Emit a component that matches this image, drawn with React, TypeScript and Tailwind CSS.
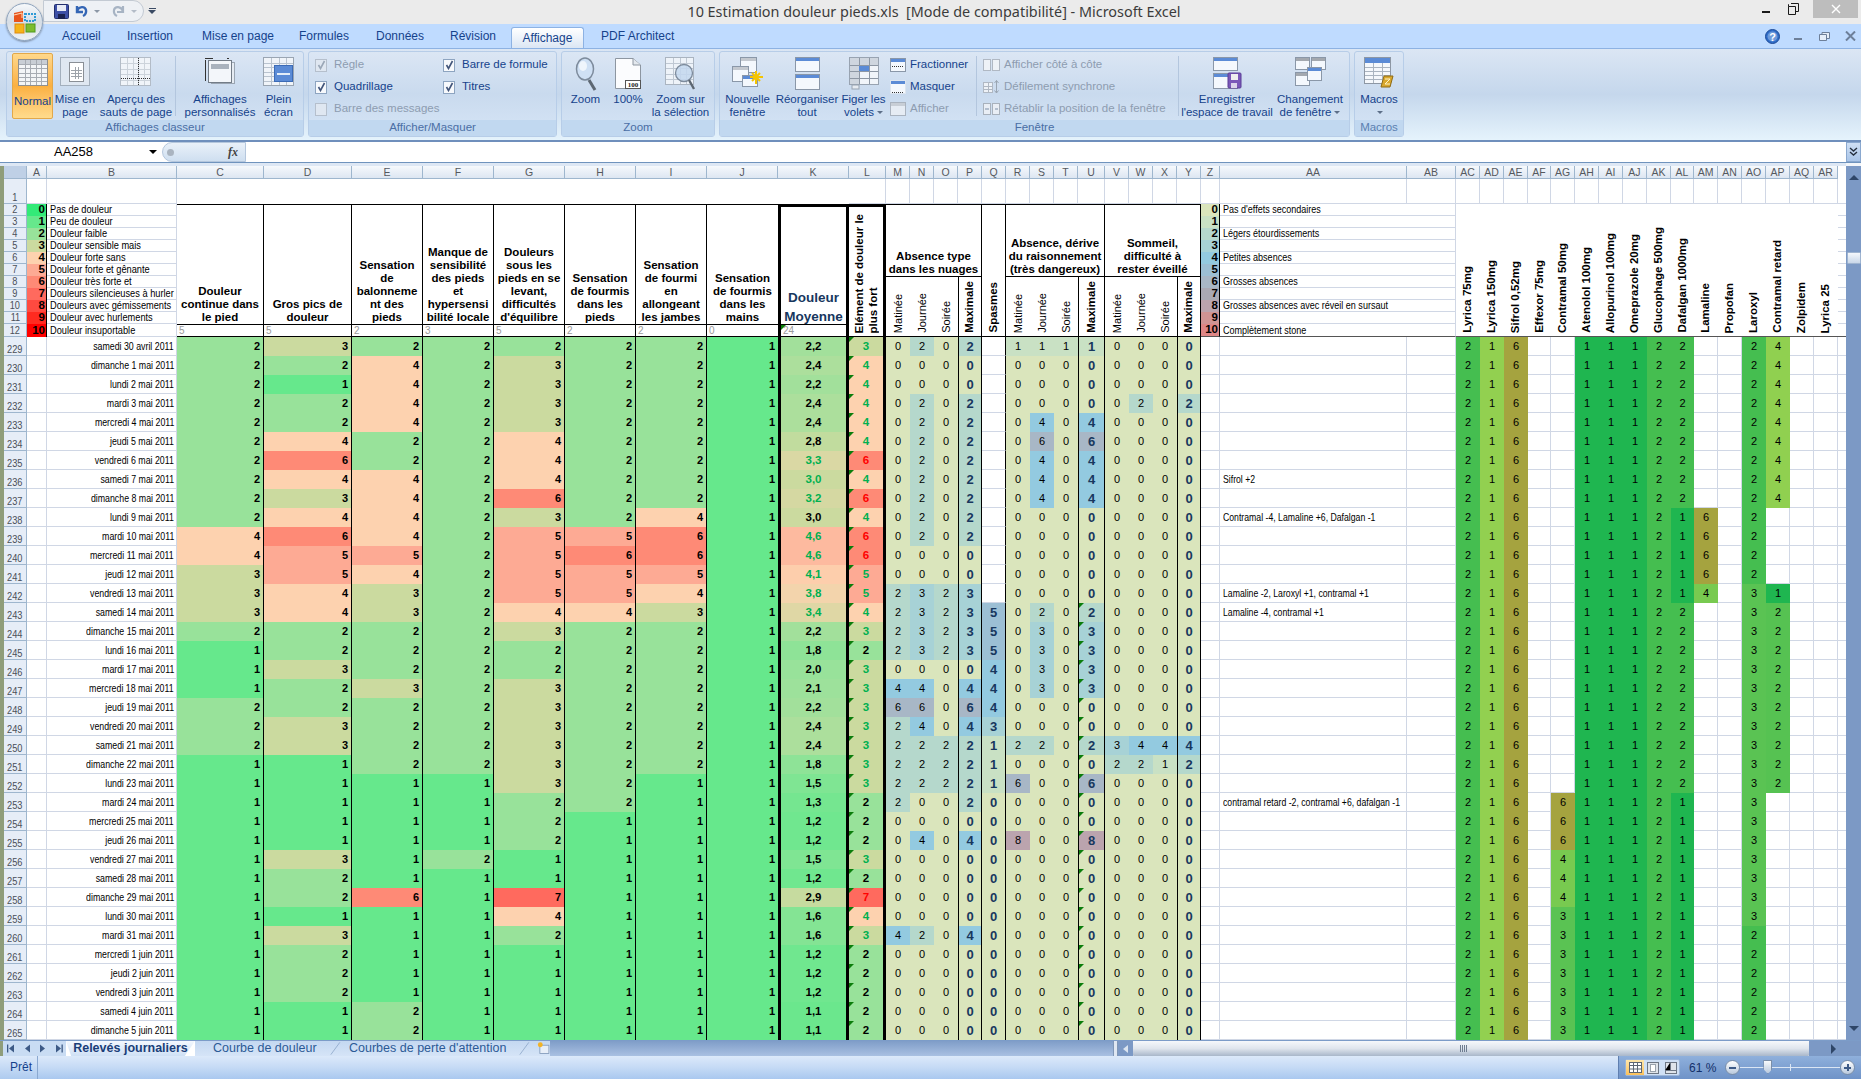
import React from "react";

// pain scale 0..10, same as the legend in column A
const PAIN = ["bg-[#33ea78]", "bg-[#66e88c]", "bg-[#98e29a]", "bg-[#cbda9f]", "bg-[#fdd2af]", "bg-[#fdaa94]", "bg-[#fe8a76]", "bg-[#ff6a5e]", "bg-[#ff4a40]", "bg-[#ff2a20]", "bg-[#ff0000]"];
const PAIN_RGB = [[51, 234, 120], [102, 232, 140], [152, 226, 154], [203, 218, 159], [253, 210, 175], [253, 170, 148], [254, 138, 118]];
// side effects scale 0..10, legend in column Z
const ABS = ["bg-[#dae5bc]", "bg-[#c9e1c4]", "bg-[#b5d8cc]", "bg-[#a7d2d6]", "bg-[#93cae0]", "bg-[#9cbfd4]", "bg-[#a8b7c6]", "bg-[#aaa9b4]", "bg-[#bba4ae]", "bg-[#d09494]", "bg-[#de8686]"];

const COLS = "grid-cols-[23px_20px_130px_87px_88px_71px_71px_71px_71px_71px_71px_71px_37px_24px_24px_24px_24px_24px_24px_24px_24px_27px_24px_24px_24px_24px_19px_187px_49px_24px_24px_24px_23px_24px_24px_24px_24px_24px_23px_24px_24px_24px_24px_24px_24px_8px]";
const LETTERS = ["A", "B", "C", "D", "E", "F", "G", "H", "I", "J", "K", "L", "M", "N", "O", "P", "Q", "R", "S", "T", "U", "V", "W", "X", "Y", "Z", "AA", "AB", "AC", "AD", "AE", "AF", "AG", "AH", "AI", "AJ", "AK", "AL", "AM", "AN", "AO", "AP", "AQ", "AR"];

// date, C..J, moyenne, max, M..P, Q, R..U, V..Y
const ROWS: [string, string, string, number, string, string, string, string][] = [
  ["samedi 30 avril 2011", "23222221", "2,2", 3, "0202", "", "1111", "0000"],
  ["dimanche 1 mai 2011", "22423221", "2,4", 4, "0000", "", "0000", "0000"],
  ["lundi 2 mai 2011", "21423221", "2,2", 4, "0000", "", "0000", "0000"],
  ["mardi 3 mai 2011", "22423221", "2,4", 4, "0202", "", "0000", "0202"],
  ["mercredi 4 mai 2011", "22423221", "2,4", 4, "0202", "", "0404", "0000"],
  ["jeudi 5 mai 2011", "24224221", "2,8", 4, "0202", "", "0606", "0000"],
  ["vendredi 6 mai 2011", "26224221", "3,3", 6, "0202", "", "0404", "0000"],
  ["samedi 7 mai 2011", "24424221", "3,0", 4, "0202", "", "0404", "0000"],
  ["dimanche 8 mai 2011", "23426221", "3,2", 6, "0202", "", "0404", "0000"],
  ["lundi 9 mai 2011", "24423241", "3,0", 4, "0202", "", "0000", "0000"],
  ["mardi 10 mai 2011", "46425561", "4,6", 6, "0202", "", "0000", "0000"],
  ["mercredi 11 mai 2011", "45525661", "4,6", 6, "0000", "", "0000", "0000"],
  ["jeudi 12 mai 2011", "35425551", "4,1", 5, "0000", "", "0000", "0000"],
  ["vendredi 13 mai 2011", "34325541", "3,8", 5, "2323", "", "0000", "0000"],
  ["samedi 14 mai 2011", "34324431", "3,4", 4, "2323", "5", "0202", "0000"],
  ["dimanche 15 mai 2011", "22223221", "2,2", 3, "2323", "5", "0303", "0000"],
  ["lundi 16 mai 2011", "12222221", "1,8", 2, "2323", "5", "0303", "0000"],
  ["mardi 17 mai 2011", "13222221", "2,0", 3, "0000", "4", "0303", "0000"],
  ["mercredi 18 mai 2011", "12323221", "2,1", 3, "4404", "4", "0303", "0000"],
  ["jeudi 19 mai 2011", "22223221", "2,2", 3, "6606", "4", "0000", "0000"],
  ["vendredi 20 mai 2011", "23223221", "2,4", 3, "2404", "3", "0000", "0000"],
  ["samedi 21 mai 2011", "23223221", "2,4", 3, "2222", "1", "2202", "3444"],
  ["dimanche 22 mai 2011", "11223221", "1,8", 3, "2222", "1", "0000", "2212"],
  ["lundi 23 mai 2011", "11113211", "1,5", 3, "2222", "1", "6006", "0000"],
  ["mardi 24 mai 2011", "11112211", "1,3", 2, "2002", "0", "0000", "0000"],
  ["mercredi 25 mai 2011", "11112111", "1,2", 2, "0000", "0", "0000", "0000"],
  ["jeudi 26 mai 2011", "11112111", "1,2", 2, "0404", "0", "8008", "0000"],
  ["vendredi 27 mai 2011", "13121111", "1,5", 3, "0000", "0", "0000", "0000"],
  ["samedi 28 mai 2011", "12111111", "1,2", 2, "0000", "0", "0000", "0000"],
  ["dimanche 29 mai 2011", "12617111", "2,9", 7, "0000", "0", "0000", "0000"],
  ["lundi 30 mai 2011", "11114111", "1,6", 4, "0000", "0", "0000", "0000"],
  ["mardi 31 mai 2011", "13112111", "1,6", 3, "4204", "0", "0000", "0000"],
  ["mercredi 1 juin 2011", "12111111", "1,2", 2, "0000", "0", "0000", "0000"],
  ["jeudi 2 juin 2011", "12111111", "1,2", 2, "0000", "0", "0000", "0000"],
  ["vendredi 3 juin 2011", "12111111", "1,2", 2, "0000", "0", "0000", "0000"],
  ["samedi 4 juin 2011", "11211111", "1,1", 2, "0000", "0", "0000", "0000"],
  ["dimanche 5 juin 2011", "11211111", "1,1", 2, "0000", "0", "0000", "0000"],
];

const COMMENTS: Record<number, string> = {
  236: "Sifrol +2",
  238: "Contramal -4, Lamaline +6, Dafalgan -1",
  242: "Lamaline -2, Laroxyl +1, contramal +1",
  243: "Lamaline -4, contramal +1",
  253: "contramal retard -2, contramal +6, dafalgan -1",
};

const MEDS = ["Lyrica 75mg", "Lyrica 150mg", "Sifrol 0,52mg", "Effexor 75mg", "Contramal 50mg", "Atenolol 100mg", "Allopurinol 100mg", "Omeprazole 20mg", "Glucophage 500mg", "Dafalgan 1000mg", "Lamaline", "Propofan", "Laroxyl", "Contramal retard", "Zolpidem", "Lyrica 25"];

function medValue(m: number, i: number): string {
  switch (m) {
    case 0: return "2";
    case 1: return "1";
    case 2: return "6";
    case 4: return i < 24 ? "" : i < 27 ? "6" : i < 30 ? "4" : "3";
    case 5: case 6: case 7: return "1";
    case 8: return "2";
    case 9: return i < 9 ? "2" : i < 14 ? "1" : i < 24 ? "2" : "1";
    case 10: return i < 9 ? "" : i < 13 ? "6" : i === 13 ? "4" : "";
    case 12: return i < 13 ? "2" : i < 31 ? "3" : "2";
    case 13: return i < 9 ? "4" : i < 13 ? "" : i === 13 ? "1" : i < 24 ? "2" : "";
    default: return "";
  }
}

function medBg(m: number, v: string) {
  if (m === 1) return "bg-[#92d050]";
  if (v === "1") return "bg-[#1fb650]";
  if (v === "2") return m === 13 ? "bg-[#56c252]" : "bg-[#45be50]";
  if (v === "3") return "bg-[#5ac353]";
  if (v === "4") return m === 13 ? "bg-[#90d050]" : "bg-[#78ca50]";
  return "bg-[#a5a33f]";
}

function meanBg(v: number) {
  const lo = Math.floor(v);
  const t = v - lo;
  const a = PAIN_RGB[lo];
  const b = PAIN_RGB[lo + 1];
  return `rgb(${a.map((c, k) => Math.round(c + (b[k] - c) * t)).join(",")})`;
}

const Lines = ({ l }: { l: string[] }) => (
  <span>
    {l.map((t, i) => (
      <React.Fragment key={i}>
        {i > 0 && <br />}
        {t}
      </React.Fragment>
    ))}
  </span>
);

// the sheet font is squeezed at 61% zoom
const Nar = ({ children, cls }: { children: React.ReactNode; cls: string }) => <span className={`inline-block whitespace-nowrap ${cls}`}>{children}</span>;

const Tri = () => <span className="absolute left-0 top-0 w-[5px] h-[5px] bg-[#0b7d0b] [clip-path:polygon(0_0,100%_0,0_100%)]" />;

const RowHead = ({ n }: { n: string | number }) => (
  <div className="bg-[#e6edf7] border-r border-b border-[#9eb6ce] text-[10.5px] leading-[11px] text-[#4a4f57] flex items-end justify-center">
    <Nar cls="scale-x-[0.88]">{n}</Nar>
  </div>
);

const Blank = () => <div className="border-r border-b border-[#d0d7e5]" />;

const Vert = ({ children, cls }: { children: React.ReactNode; cls: string }) => (
  <span className={`[writing-mode:vertical-rl] rotate-180 text-left ${cls}`}>{children}</span>
);

const HEAD = "border-t border-r border-black flex items-end justify-center text-center font-bold text-[11.5px] leading-[13px] row-span-10 text-black";
const WEIGHT = "border-t border-r border-b border-black text-[10px] leading-[11px] text-[#9a9a9a] pl-[2px]";

function Legend({ n, text }: { n: number; text: string }) {
  return (
    <>
      <div className={`${PAIN[n]} border-r border-black flex items-center justify-end pr-[1px] font-bold text-[11.5px] leading-none`}>{n}</div>
      <div className="border-r border-b border-[#d0d7e5] text-[11px] leading-none flex items-center pl-[3px]">
        <Nar cls="scale-x-[0.84] origin-left">{text}</Nar>
      </div>
    </>
  );
}

function Legend2({ n, text }: { n: number; text: string }) {
  return (
    <>
      <div className={`${ABS[n]} border-r border-black flex items-center justify-end pr-[1px] font-bold text-[11.5px] leading-none ${n === 10 ? "border-b border-b-[#555]" : ""}`}>{n}</div>
      <div className={`border-b ${n === 10 ? "border-b-[#555]" : "border-[#d0d7e5]"} text-[11px] leading-none flex items-center pl-[3px]`}>
        <Nar cls="scale-x-[0.82] origin-left">{text}</Nar>
      </div>
      <div className={`border-b ${n === 10 ? "border-b-[#555]" : "border-[#d0d7e5]"} border-r border-r-[#d0d7e5]`} />
    </>
  );
}

const PAIN_LEGEND = ["Pas de douleur", "Peu de douleur", "Douleur faible", "Douleur sensible mais", "Douleur forte sans", "Douleur forte et gênante", "Douleur très forte et", "Douleurs silencieuses à hurler", "Douleurs avec gémissements", "Douleur avec hurlements", "Douleur insuportable"];
const SIDE_LEGEND = ["Pas d'effets secondaires", "", "Légers étourdissements", "", "Petites absences", "", "Grosses absences", "", "Grosses absences avec réveil en sursaut", "", "Complètement stone"];

function SubHeads() {
  return (
    <>
      {["Matinée", "Journée", "Soirée"].map((t) => (
        <div key={t} className="row-span-5 border-t border-b border-t-black border-b-black flex items-end justify-center pb-[3px]">
          <Vert cls="text-[11px] leading-none">{t}</Vert>
        </div>
      ))}
    </>
  );
}

function MaxHead() {
  return (
    <div className="row-span-5 border border-black flex items-end justify-center pb-[3px]">
      <Vert cls="font-bold text-[11.5px] leading-none">Maximale</Vert>
    </div>
  );
}

function Sheet() {
  return (
    <div className={`grid ${COLS} grid-rows-[13px_25px_repeat(10,12px)_13px_repeat(37,19px)] flex-1 font-['Liberation_Sans',sans-serif] text-black bg-white`}>
      {/* column letters */}
      <div className="bg-[#bfd0e6] border-r border-b border-[#9eb6ce]" />
      {LETTERS.map((c) => (
        <div key={c} className="bg-gradient-to-b from-[#f6f9fc] to-[#dde6f2] border-r border-b border-[#9eb6ce] text-[10.5px] leading-none text-[#55595f] flex items-center justify-center">{c}</div>
      ))}
      <div className="bg-white" />

      {/* row 1 */}
      <RowHead n={1} />
      <Blank />
      <Blank />
      <div className="col-span-9" />
      {LETTERS.slice(11).map((c) => (
        <Blank key={c} />
      ))}
      <div className="border-b border-[#d0d7e5]" />

      {/* rows 2..12 */}
      {PAIN_LEGEND.map((text, i) => (
        <React.Fragment key={i}>
          <RowHead n={i + 2} />
          <Legend n={i} text={text} />
          {i === 0 && (
            <>
              <div className={HEAD}><Lines l={["Douleur", "continue dans", "le pied"]} /></div>
              <div className={HEAD}><Lines l={["Gros pics de", "douleur"]} /></div>
              <div className={HEAD}><Lines l={["Sensation", "de", "balonneme", "nt des", "pieds"]} /></div>
              <div className={HEAD}><Lines l={["Manque de", "sensibilité", "des pieds", "et", "hypersensi", "bilité locale"]} /></div>
              <div className={HEAD}><Lines l={["Douleurs", "sous les", "pieds en se", "levant,", "difficultés", "d'équilibre"]} /></div>
              <div className={HEAD}><Lines l={["Sensation", "de fourmis", "dans les", "pieds"]} /></div>
              <div className={HEAD}><Lines l={["Sensation", "de fourmi", "en", "allongeant", "les jambes"]} /></div>
              <div className={`${HEAD} border-r-0`}><Lines l={["Sensation", "de fourmis", "dans les", "mains"]} /></div>
              <div className="row-span-10 border-t-[3px] border-x-[3px] border-black flex items-end justify-center text-center font-bold text-[13.5px] leading-[19px] text-[#17375e]">
                <span className="mb-[-2px]"><Lines l={["Douleur", "Moyenne"]} /></span>
              </div>
              <div className="row-span-11 border-t-[3px] border-r-[3px] border-b border-black flex items-end justify-center pb-[3px]">
                <Vert cls="font-bold text-[11.5px] leading-[14px]"><Lines l={["Elément de douleur le", "plus fort"]} /></Vert>
              </div>
              <div className="col-span-4 row-span-6 border-t border-r border-black flex items-end justify-center text-center font-bold text-[11.5px] leading-[13px]"><Lines l={["Absence type", "dans les nuages"]} /></div>
              <div className="row-span-11 border-t border-r border-b border-black flex items-end justify-center pb-[3px]">
                <Vert cls="font-bold text-[11.5px] leading-none">Spasmes</Vert>
              </div>
              <div className="col-span-4 row-span-6 border-t border-r border-black flex items-end justify-center text-center font-bold text-[11.5px] leading-[13px]"><Lines l={["Absence, dérive", "du raisonnement", "(très dangereux)"]} /></div>
              <div className="col-span-4 row-span-6 border-t border-r border-black flex items-end justify-center text-center font-bold text-[11.5px] leading-[13px]"><Lines l={["Sommeil,", "difficulté à", "rester éveillé"]} /></div>
            </>
          )}
          {i === 6 && (
            <>
              <SubHeads />
              <MaxHead />
              <SubHeads />
              <MaxHead />
              <SubHeads />
              <MaxHead />
            </>
          )}
          {i === 10 &&
            ["5", "5", "2", "3", "5", "2", "2", "0"].map((w, k) => (
              <div key={k} className={`${WEIGHT} ${k === 7 ? "border-r-0" : ""}`}>{w}</div>
            ))}
          {i === 10 && (
            <div className="relative border-t border-b-[1px] border-x-[3px] border-black text-[10px] leading-[11px] text-[#9a9a9a] pl-[2px]">
              <Tri />
              24
            </div>
          )}
          <Legend2 n={i} text={SIDE_LEGEND[i]} />
          {i === 0 &&
            MEDS.map((m) => (
              <div key={m} className="row-span-11 border-b border-[#555] flex items-end justify-center pb-[3px]">
                <Vert cls="font-bold text-[11.5px] leading-none whitespace-nowrap">{m}</Vert>
              </div>
            ))}
          <div className={`border-b ${i === 10 ? "border-[#555]" : "border-[#d0d7e5]"}`} />
        </React.Fragment>
      ))}

      {/* data rows 229..265 */}
      {ROWS.map(([date, pain, mean, top, nuages, spasme, derive, sommeil], i) => {
        const n = 229 + i;
        const val = parseFloat(mean.replace(",", "."));
        const meanGreen = val >= 3 && n !== 238;
        const topText = top === 2 ? "text-black" : top >= 6 ? "text-[#ff0000]" : "text-[#00b050]";
        return (
          <React.Fragment key={n}>
            <RowHead n={n} />
            <Blank />
            <div className="border-r border-b border-[#d0d7e5] text-[11px] leading-none flex items-center justify-end pr-[2px]">
              <Nar cls="scale-x-[0.8] origin-right">{date}</Nar>
            </div>
            {pain.split("").map((p, k) => (
              <div key={k} className={`${PAIN[+p]} ${k === 7 ? "" : "border-r border-black"} flex items-center justify-end pr-[3px] font-bold text-[11px] leading-none`}>{p}</div>
            ))}
            <div className={`border-x-[3px] border-black flex items-center justify-center font-bold text-[11.5px] leading-none ${meanGreen ? "text-[#00b050]" : "text-black"}`} style={{ backgroundColor: meanBg(val) }}>{mean}</div>
            <div className={`relative ${PAIN[top]} border-r-[3px] border-black flex items-center justify-center font-bold text-[11.5px] leading-none ${topText}`}>
              <Tri />
              {top}
            </div>
            {nuages.split("").map((v, k) => (
              <div key={k} className={k === 3 ? `${ABS[+v]} border-x border-black flex items-center justify-center font-bold text-[13px] leading-none text-[#17375e]` : `${ABS[+v]} flex items-center justify-center text-[11px] leading-none`}>{v}</div>
            ))}
            {spasme === "" ? (
              <div className="border-r border-b border-r-black border-b-[#d0d7e5]" />
            ) : (
              <div className={`${ABS[+spasme]} border-r border-black flex items-center justify-center font-bold text-[13px] leading-none text-[#17375e]`}>{spasme}</div>
            )}
            {derive.split("").map((v, k) => (
              <div key={k} className={k === 3 ? `relative ${ABS[+v]} border-x border-black flex items-center justify-center font-bold text-[13px] leading-none text-[#17375e]` : `${ABS[+v]} flex items-center justify-center text-[11px] leading-none`}>
                {k === 3 && i >= 14 && <Tri />}
                {v}
              </div>
            ))}
            {sommeil.split("").map((v, k) => (
              <div key={k} className={k === 3 ? `${ABS[+v]} border-x border-black flex items-center justify-center font-bold text-[13px] leading-none text-[#17375e]` : `${ABS[+v]} flex items-center justify-center text-[11px] leading-none`}>{v}</div>
            ))}
            <Blank />
            <div className="border-r border-b border-[#d0d7e5] text-[11px] leading-none flex items-center pl-[3px]">
              <Nar cls="scale-x-[0.79] origin-left">{COMMENTS[n] ?? ""}</Nar>
            </div>
            <Blank />
            {MEDS.map((m, k) => {
              const v = medValue(k, i);
              return v === "" ? (
                <Blank key={m} />
              ) : (
                <div key={m} className={`${medBg(k, v)} flex items-center justify-center text-[11px] leading-none`}>{v}</div>
              );
            })}
            <div className="border-b border-[#d0d7e5]" />
          </React.Fragment>
        );
      })}
    </div>
  );
}

/* ---------- ribbon icons ---------- */

const Win = ({ x, y, w, h, bar = "#5b8bd6", fill = "#f4f8fd", stroke = "#8a97a8" }: { x: number; y: number; w: number; h: number; bar?: string; fill?: string; stroke?: string }) => (
  <g>
    <rect x={x + 0.5} y={y + 0.5} width={w} height={h} fill={fill} stroke={stroke} />
    <rect x={x + 1} y={y + 1} width={w - 1} height={3} fill={bar} />
  </g>
);

const Cells = ({ x, y, w, h, nx, ny, stroke = "#b9c3cf" }: { x: number; y: number; w: number; h: number; nx: number; ny: number; stroke?: string }) => (
  <g stroke={stroke} strokeWidth="1">
    {Array.from({ length: nx - 1 }, (_, i) => (
      <line key={i} x1={x + Math.round(((i + 1) * w) / nx) + 0.5} y1={y} x2={x + Math.round(((i + 1) * w) / nx) + 0.5} y2={y + h} />
    ))}
    {Array.from({ length: ny - 1 }, (_, i) => (
      <line key={i} x1={x} y1={y + Math.round(((i + 1) * h) / ny) + 0.5} x2={x + w} y2={y + Math.round(((i + 1) * h) / ny) + 0.5} />
    ))}
  </g>
);

const Ico = ({ w = 32, h = 32, children }: { w?: number; h?: number; children: React.ReactNode }) => (
  <svg width={w} height={h} viewBox={`0 0 ${w} ${h}`}>{children}</svg>
);

const I = {
  normal: (
    <Ico w={30} h={28}>
      <rect x="0.5" y="0.5" width="29" height="26" fill="#f3f5f7" stroke="#8f8f8f" />
      <rect x="1" y="1" width="28" height="4" fill="#c9ced5" />
      <Cells x={1} y={1} w={28} h={25} nx={5} ny={6} stroke="#a7acb3" />
    </Ico>
  ),
  page: (
    <Ico w={31} h={30}>
      <rect x="0.5" y="0.5" width="29" height="28" fill="#dfe7f1" stroke="#a3afbd" />
      <rect x="9.5" y="5.5" width="14" height="19" fill="#fff" stroke="#8a8f96" />
      <Cells x={11} y={10} w={11} h={12} nx={3} ny={4} stroke="#9da3aa" />
    </Ico>
  ),
  breaks: (
    <Ico w={32} h={30}>
      <rect x="0.5" y="0.5" width="30" height="28" fill="#f0f4f9" stroke="#b3bcc7" />
      <Cells x={1} y={1} w={29} h={27} nx={5} ny={5} stroke="#ccd3db" />
      <line x1="18.5" y1="1" x2="18.5" y2="28" stroke="#333" strokeDasharray="1 1" />
      <line x1="1" y1="21.5" x2="30" y2="21.5" stroke="#333" strokeDasharray="1 1" />
    </Ico>
  ),
  custom: (
    <Ico w={30} h={30}>
      <rect x="6.5" y="5.5" width="23" height="21" fill="#e6ecf3" stroke="#9aa5b2" />
      <rect x="3.5" y="3.5" width="23" height="22" fill="#f3f6fa" stroke="#737c87" />
      <rect x="6" y="7" width="18" height="5" fill="#a9b2bd" />
      <line x1="0" y1="1.5" x2="8" y2="1.5" stroke="#333" />
      <line x1="22" y1="1.5" x2="24" y2="1.5" stroke="#333" />
      <line x1="0.5" y1="3" x2="0.5" y2="24" stroke="#333" />
    </Ico>
  ),
  full: (
    <Ico w={31} h={30}>
      <rect x="0.5" y="0.5" width="30" height="28" fill="#f0f4f9" stroke="#9aa5b2" />
      <Cells x={1} y={1} w={29} h={27} nx={4} ny={6} stroke="#b9c3cf" />
      <rect x="11.5" y="8.5" width="18" height="16" fill="#5b8bd6" stroke="#3c6bb6" />
      <rect x="14" y="16" width="13" height="2" fill="#e3edf9" />
    </Ico>
  ),
  zoom: (
    <Ico w={22} h={36}>
      <ellipse cx="10" cy="12" rx="8.5" ry="11" fill="#cfe0f4" stroke="#7d8b9c" strokeWidth="1.5" />
      <ellipse cx="8" cy="9" rx="4" ry="5" fill="#eff5fc" />
      <line x1="14" y1="23" x2="20" y2="33" stroke="#5d6772" strokeWidth="3" />
    </Ico>
  ),
  hundred: (
    <Ico w={28} h={34}>
      <path d="M1.5 1.5H19L26.5 8V31.5H1.5Z" fill="#fbfcfe" stroke="#8d96a1" />
      <path d="M19 1.5V8H26.5" fill="#e3e8ee" stroke="#8d96a1" />
      <rect x="11.5" y="23.5" width="15" height="8" fill="#fff" stroke="#555" />
      <text x="19" y="30" fontSize="7" fontWeight="700" textAnchor="middle" fill="#222" fontFamily="Liberation Serif, serif">100</text>
    </Ico>
  ),
  sel: (
    <Ico w={32} h={35}>
      <rect x="0.5" y="0.5" width="28" height="27" fill="#eef3f9" stroke="#aab4c0" />
      <Cells x={1} y={1} w={27} h={26} nx={4} ny={5} stroke="#bfc8d3" />
      <circle cx="19" cy="16" r="8.5" fill="#c3d7ee" fillOpacity="0.85" stroke="#7d8b9c" strokeWidth="1.3" />
      <line x1="24" y1="23" x2="29" y2="32" stroke="#5d6772" strokeWidth="2.4" />
    </Ico>
  ),
  newWin: (
    <Ico w={32} h={30}>
      <Win x={8} y={0} w={16} h={15} bar="#c3c8cf" />
      <Win x={0} y={9} w={16} h={15} bar="#c3c8cf" />
      <Win x={10} y={18} w={15} h={11} />
      <g stroke="#f4c400" strokeWidth="2">
        <line x1="24" y1="14" x2="24" y2="27" />
        <line x1="18" y1="20" x2="31" y2="20" />
        <line x1="20" y1="16" x2="28" y2="24" />
        <line x1="28" y1="16" x2="20" y2="24" />
      </g>
    </Ico>
  ),
  arrange: (
    <Ico w={25} h={33}>
      <Win x={0} y={0} w={24} h={14} />
      <Win x={0} y={17} w={24} h={15} />
    </Ico>
  ),
  freeze: (
    <Ico w={30} h={33}>
      <rect x="0.5" y="0.5" width="29" height="27" fill="#f1f5fa" stroke="#98a3b1" />
      <rect x="1" y="1" width="28" height="7" fill="#cfd6df" />
      <rect x="1" y="1" width="9" height="26" fill="#cfd6df" />
      <Cells x={1} y={1} w={28} h={26} nx={3} ny={4} stroke="#8d97a4" />
      <rect x="10" y="9" width="10" height="5" fill="#5b8bd6" />
      <rect x="3" y="28" width="7" height="4" fill="#e6ebf1" stroke="#98a3b1" />
    </Ico>
  ),
  split: (
    <Ico w={16} h={14}>
      <Win x={0} y={0} w={15} h={13} />
      <line x1="2" y1="8.5" x2="14" y2="8.5" stroke="#333" strokeDasharray="1 1" />
    </Ico>
  ),
  hide: (
    <Ico w={16} h={14}>
      <Win x={0} y={0} w={15} h={13} stroke="#dde5ef" />
      <line x1="2" y1="12.5" x2="14" y2="12.5" stroke="#333" strokeDasharray="1 1" />
    </Ico>
  ),
  show: (
    <Ico w={16} h={14}>
      <Win x={0} y={0} w={15} h={13} bar="#c8ced6" stroke="#aab3bf" fill="#e6ecf4" />
    </Ico>
  ),
  side: (
    <Ico w={17} h={14}>
      <rect x="0.5" y="1.5" width="7" height="11" fill="#eef2f7" stroke="#b0b8c3" />
      <rect x="9.5" y="1.5" width="7" height="11" fill="#eef2f7" stroke="#b0b8c3" />
    </Ico>
  ),
  sync: (
    <Ico w={17} h={14}>
      <rect x="0.5" y="2.5" width="9" height="10" fill="#eef2f7" stroke="#b0b8c3" />
      <Cells x={1} y={3} w={8} h={9} nx={2} ny={3} stroke="#b0b8c3" />
      <path d="M13.5 0.5V13M11.5 3L13.5 0.5L15.5 3M11.5 10.5L13.5 13L15.5 10.5" fill="none" stroke="#9aa5b2" />
    </Ico>
  ),
  reset: (
    <Ico w={17} h={14}>
      <rect x="0.5" y="1.5" width="7" height="11" fill="#e9eef5" stroke="#a8b1bc" />
      <rect x="9.5" y="1.5" width="7" height="11" fill="#e9eef5" stroke="#a8b1bc" />
      <path d="M2 7H6M12 7H15" stroke="#7d8fa8" />
    </Ico>
  ),
  save: (
    <Ico w={29} h={33}>
      <Win x={0} y={0} w={24} h={13} />
      <Win x={0} y={16} w={24} h={15} />
      <rect x="15" y="16" width="13" height="15" rx="1" fill="#7b58b8" stroke="#5a3d96" />
      <rect x="18" y="17" width="7" height="6" fill="#eee" />
      <rect x="18" y="26" width="6" height="5" fill="#dcd4ea" />
    </Ico>
  ),
  change: (
    <Ico w={31} h={30}>
      <Win x={0} y={0} w={14} h={12} bar="#a3a8af" />
      <Win x={16} y={0} w={14} h={12} bar="#a3a8af" />
      <Win x={0} y={15} w={14} h={13} bar="#a3a8af" />
      <Win x={12} y={10} w={14} h={13} />
    </Ico>
  ),
  macro: (
    <Ico w={30} h={32}>
      <rect x="0.5" y="0.5" width="26" height="26" fill="#f5f8fc" stroke="#8d97a4" />
      <rect x="1" y="1" width="25" height="5" fill="#5b8bd6" />
      <Cells x={1} y={6} w={25} h={20} nx={3} ny={5} stroke="#aab4c0" />
      <path d="M20 19H29L26 30H17Z" fill="#d9a82e" stroke="#8f6b14" />
      <path d="M21 22H26L21 27H26" fill="none" stroke="#fff3c4" />
    </Ico>
  ),
};

const LABEL = "text-[#15428b]";

function Big({ w, icon, label, caret, off }: { w: string; icon: React.ReactNode; label: string[]; caret?: boolean; off?: boolean }) {
  return (
    <div className={`${w} flex flex-col items-center text-center`}>
      <div className="h-[41px] pt-[5px] flex justify-center">{icon}</div>
      <div className={`leading-[13px] whitespace-nowrap ${off ? "text-[#8d9cb0]" : LABEL}`}>
        {label.map((t, i) => (
          <div key={i}>
            {t}
            {caret && i === label.length - 1 && <span className="inline-block ml-[3px] mb-[2px] border-x-[3px] border-t-[3px] border-x-transparent border-t-[#5d6f88]" />}
          </div>
        ))}
      </div>
    </div>
  );
}

function Group({ w, title, children, dim }: { w: string; title: string; children?: React.ReactNode; dim?: boolean }) {
  return (
    <div className={`${w} h-[86px] flex flex-col rounded-[3px] border border-[#b7cde8] bg-gradient-to-b from-[#dbe6f4] via-[#c9daee] to-[#d6e5f6]`}>
      <div className="h-[68px] flex">{children}</div>
      <div className={`h-[16px] bg-[#c1d8f0] text-center leading-[15px] ${dim ? "text-[#5a7fb0]" : "text-[#4a6ea5]"}`}>{title}</div>
    </div>
  );
}

function Check({ on, off, label }: { on?: boolean; off?: boolean; label: string }) {
  return (
    <div className="h-[22px] flex items-center gap-[7px] whitespace-nowrap">
      <span className={`w-[12px] h-[13px] border ${off ? "border-[#b5bfcc] bg-[#dfe7f1]" : "border-[#8da4c0] bg-[#f7f9fc]"} flex items-center justify-center`}>
        {on && (
          <svg width="9" height="10" viewBox="0 0 9 10">
            <path d="M1.5 5L3.5 8.5L7.5 1" fill="none" stroke={off ? "#9aa7b7" : "#42557a"} strokeWidth="1.6" />
          </svg>
        )}
      </span>
      <span className={off ? "text-[#8d9cb0]" : LABEL}>{label}</span>
    </div>
  );
}

const Small = ({ icon, label, off }: { icon: React.ReactNode; label: string; off?: boolean }) => (
  <div className="h-[22px] flex items-center gap-[4px] whitespace-nowrap">
    {icon}
    <span className={off ? "text-[#8d9cb0]" : LABEL}>{label}</span>
  </div>
);

const Sep = () => <div className="w-px h-[60px] bg-[#b3c6de] mt-[4px]" />;

function OfficeButton() {
  return (
    <div className="absolute left-[6px] top-[3px] w-[37px] h-[38px] rounded-full border border-[#8fa4bd] bg-gradient-to-b from-[#f7f9fb] via-[#d5dde6] to-[#eef2f6] flex items-center justify-center shadow-[0_1px_2px_#7a8aa0]">
      <svg width="24" height="25" viewBox="0 0 24 25">
        <path d="M1 3L10 1V12H1Z" fill="#e8541c" />
        <path d="M1 5L9 3V8" fill="none" stroke="#ffd9b8" />
        <rect x="12" y="4" width="10" height="7" fill="none" stroke="#2e9ad6" strokeWidth="2" strokeDasharray="2 1" />
        <rect x="2" y="14" width="9" height="9" fill="#f4b41a" stroke="#e28a10" />
        <rect x="13" y="14" width="9" height="8" fill="#7cbc2e" stroke="#4f9a1e" />
      </svg>
    </div>
  );
}

function TitleBar() {
  return (
    <div className="h-[24px] bg-[#ebebeb] flex items-start">
      <div className="w-[156px] h-[24px] flex items-center pl-[43px]">
        <div className="w-[103px] h-[22px] rounded-r-full border border-[#c3cad3] bg-[#eef1f5] flex items-center pl-[10px] gap-[5px] mt-[-2px]">
          <svg width="15" height="15" viewBox="0 0 15 15">
            <rect x="0.5" y="0.5" width="14" height="14" rx="1" fill="#3c4fa6" stroke="#222f6e" />
            <rect x="3" y="1" width="9" height="6" fill="#e7ebf6" />
            <rect x="4" y="10" width="7" height="5" fill="#1a2250" />
          </svg>
          <svg width="15" height="14" viewBox="0 0 15 14">
            <path d="M3 2V8H9M3 7C5 2 11 2 12 6C12.5 9 11 11 9 12" fill="none" stroke="#3466b5" strokeWidth="2.4" />
          </svg>
          <span className="border-x-[3px] border-t-[3px] border-x-transparent border-t-[#8b97a6]" />
          <svg width="15" height="14" viewBox="0 0 15 14" className="ml-[6px]">
            <path d="M12 2V8H6M12 7C10 2 4 2 3 6C2.5 9 4 11 6 12" fill="none" stroke="#a7b4c4" strokeWidth="2.2" />
          </svg>
          <span className="border-x-[3px] border-t-[3px] border-x-transparent border-t-[#b3bcc8]" />
        </div>
        <div className="ml-[4px] mt-[-2px] flex flex-col items-center gap-[1px]">
          <span className="w-[7px] h-[1px] bg-[#3a4a63]" />
          <span className="border-x-[4px] border-t-[4px] border-x-transparent border-t-[#3a4a63]" />
        </div>
      </div>
      <div className="flex-1 text-center text-[14.4px] leading-[24px] text-[#3b3b3b] font-['Noto_Sans',sans-serif] whitespace-pre">10 Estimation douleur pieds.xls  [Mode de compatibilité] - Microsoft Excel</div>
      <div className="w-[149px] h-[18px] flex justify-end items-center pr-[3px]">
        <span className="w-[8px] h-[2px] bg-[#1a1a1a] mt-[5px] mr-[18px]" />
        <svg width="11" height="12" viewBox="0 0 11 12" className="mr-[14px]">
          <path d="M0.5 3.5H7.5V11.5H0.5ZM0.5 3.5V1.5H1M3 0.5H10.5V8.5H8" fill="none" stroke="#1a1a1a" />
        </svg>
        <div className="w-[45px] h-[18px] bg-[#bdbdbd] flex items-center justify-center">
          <svg width="10" height="10" viewBox="0 0 10 10">
            <path d="M1 1L9 9M9 1L1 9" stroke="#fff" strokeWidth="1.4" />
          </svg>
        </div>
      </div>
    </div>
  );
}

function TabRow() {
  const tabs: [string, string][] = [
    ["Accueil", "w-[65px]"],
    ["Insertion", "w-[75px]"],
    ["Mise en page", "w-[97px]"],
    ["Formules", "w-[77px]"],
    ["Données", "w-[74px]"],
    ["Révision", "w-[61px]"],
  ];
  return (
    <div className="h-[24px] bg-[#bfdbff] flex items-end pl-[62px] text-[#15428b] text-[12px] relative">
      {tabs.map(([t, w]) => (
        <div key={t} className={`${w} h-[24px] leading-[24px] whitespace-nowrap`}>{t}</div>
      ))}
      <div className="w-[73px] h-[21px] rounded-t-[3px] border border-b-0 border-[#8db2e3] bg-gradient-to-b from-[#ffffff] to-[#dbe6f4] text-center leading-[21px]">Affichage</div>
      <div className="ml-[17px] h-[24px] leading-[24px] whitespace-nowrap">PDF Architect</div>
      <div className="ml-auto h-[24px] flex items-center gap-[14px] pr-[5px]">
        <svg width="15" height="15" viewBox="0 0 15 15">
          <circle cx="7.5" cy="7.5" r="7" fill="#2e6cc8" stroke="#1e4a96" />
          <circle cx="7.5" cy="7.5" r="5" fill="#e9f1fb" fillOpacity="0.35" />
          <text x="7.5" y="11.5" fontSize="11" fontWeight="700" textAnchor="middle" fill="#fff" fontFamily="Liberation Sans, sans-serif">?</text>
        </svg>
        <span className="w-[8px] h-[2px] bg-[#6d7f99] mt-[6px]" />
        <svg width="11" height="9" viewBox="0 0 11 9" className="ml-[3px]">
          <path d="M0.5 2.5H7.5V8.5H0.5ZM3 2.5V0.5H10.5V6.5H7.5" fill="#e6eef9" stroke="#6d7f99" />
        </svg>
        <svg width="11" height="10" viewBox="0 0 11 10" className="ml-[1px]">
          <path d="M1 0.5L10 9.5M10 0.5L1 9.5" stroke="#6d7f99" strokeWidth="2" />
        </svg>
      </div>
    </div>
  );
}

function Ribbon() {
  return (
    <div className="h-[92px] border-t border-[#8db2e3] bg-gradient-to-b from-[#dbe6f4] via-[#c5d7ec] to-[#e5f3fc] flex pl-[6px] pt-[2px] gap-[4px] text-[11.5px] font-['Liberation_Sans',sans-serif]">
      <Group w="w-[298px]" title="Affichages classeur">
        <div className="w-[5px]" />
        <div className="w-[41px] h-[66px] mt-[1px] rounded-[2px] border border-[#e2a84a] bg-gradient-to-b from-[#ffd88a] via-[#fbb040] to-[#ffdb8c]">
          <Big w="w-full" icon={I.normal} label={["Normal"]} />
        </div>
        <Big w="w-[44px]" icon={I.page} label={["Mise en", "page"]} />
        <Big w="w-[78px]" icon={I.breaks} label={["Aperçu des", "sauts de page"]} />
        <div className="w-[5px]"><Sep /></div>
        <Big w="w-[80px]" icon={I.custom} label={["Affichages", "personnalisés"]} />
        <Big w="w-[37px]" icon={I.full} label={["Plein", "écran"]} />
      </Group>
      <Group w="w-[249px]" title="Afficher/Masquer">
        <div className="w-[134px] pl-[6px] pt-[2px]">
          <Check on off label="Règle" />
          <Check on label="Quadrillage" />
          <Check off label="Barre des messages" />
        </div>
        <div className="pt-[2px]">
          <Check on label="Barre de formule" />
          <Check on label="Titres" />
        </div>
      </Group>
      <Group w="w-[154px]" title="Zoom">
        <div className="w-[5px]" />
        <Big w="w-[37px]" icon={I.zoom} label={["Zoom"]} />
        <Big w="w-[48px]" icon={I.hundred} label={["100%"]} />
        <Big w="w-[57px]" icon={I.sel} label={["Zoom sur", "la sélection"]} />
      </Group>
      <Group w="w-[631px]" title="Fenêtre">
        <div className="w-[3px]" />
        <Big w="w-[49px]" icon={I.newWin} label={["Nouvelle", "fenêtre"]} />
        <Big w="w-[70px]" icon={I.arrange} label={["Réorganiser", "tout"]} />
        <Big w="w-[43px]" icon={I.freeze} label={["Figer les", "volets"]} caret />
        <div className="w-[91px] pl-[5px] pt-[2px]">
          <Small icon={I.split} label="Fractionner" />
          <Small icon={I.hide} label="Masquer" />
          <Small icon={I.show} label="Afficher" off />
        </div>
        <Sep />
        <div className="w-[201px] pl-[6px] pt-[2px]">
          <Small icon={I.side} label="Afficher côté à côte" off />
          <Small icon={I.sync} label="Défilement synchrone" off />
          <Small icon={I.reset} label="Rétablir la position de la fenêtre" off />
        </div>
        <Sep />
        <Big w="w-[96px]" icon={I.save} label={["Enregistrer", "l'espace de travail"]} />
        <Big w="w-[70px]" icon={I.change} label={["Changement", "de fenêtre"]} caret />
      </Group>
      <Group w="w-[50px]" title="Macros" dim>
        <Big w="w-full" icon={I.macro} label={["Macros", ""]} caret />
      </Group>
    </div>
  );
}

function FormulaBar() {
  return (
    <>
      <div className="h-[2px] bg-[#6f8fbc]" />
      <div className="h-[20px] bg-white flex pl-[3px] font-['Liberation_Sans',sans-serif]">
        <div className="w-[159px] flex items-center text-[13px] text-black">
          <span className="ml-[51px]">AA258</span>
          <span className="ml-auto mr-[5px] border-x-[4px] border-t-[4px] border-x-transparent border-t-black" />
        </div>
        <div className="w-[84px] rounded-l-full border border-[#b5c7dd] bg-gradient-to-b from-[#eaf1f9] to-[#cfdff0] flex items-center pl-[4px]">
          <span className="w-[7px] h-[7px] rounded-full bg-[#aab4c0]" />
          <span className="ml-auto mr-[7px] italic font-bold text-[12px] text-[#444] font-['Liberation_Serif',serif]">fx</span>
        </div>
        <div className="flex-1" />
        <div className="w-[15px] bg-gradient-to-b from-[#cfe0f5] to-[#a9c5e8] border border-[#8aa8cf] flex items-center justify-center">
          <svg width="9" height="11" viewBox="0 0 9 11">
            <path d="M1 1L4.5 4L8 1M1 5L4.5 8L8 5" fill="none" stroke="#26303f" strokeWidth="1.4" />
          </svg>
        </div>
      </div>
      <div className="h-[1px] bg-[#6f93bd]" />
      <div className="h-[3px] bg-[#dde7f4] flex justify-end">
        <div className="w-[15px] bg-[#f2f5f9]" />
      </div>
    </>
  );
}

function VScroll() {
  return (
    <div className="w-[15px] bg-[#7c99c5] flex flex-col items-center">
      <div className="h-[14px] flex items-end">
        <span className="border-x-[5px] border-b-[5px] border-x-transparent border-b-[#2f4668]" />
      </div>
      <div className="h-[72px]" />
      <div className="w-[14px] h-[12px] rounded-[1px] border border-[#9fb4d0] bg-gradient-to-b from-[#f5f8fc] to-[#c9d7e9]" />
      <div className="flex-1" />
      <div className="h-[14px] flex items-start">
        <span className="border-x-[5px] border-t-[5px] border-x-transparent border-t-[#2f4668]" />
      </div>
    </div>
  );
}

function NavTri({ dir, bar }: { dir: "l" | "r"; bar?: boolean }) {
  return (
    <svg width="8" height="9" viewBox="0 0 8 9">
      <path d={dir === "l" ? "M7 0.5V8.5L2 4.5Z" : "M1 0.5V8.5L6 4.5Z"} fill="#3d5a86" />
      {bar && <rect x={dir === "l" ? 0 : 6.5} y="0.5" width="1.3" height="8" fill="#3d5a86" />}
    </svg>
  );
}

function SheetTabs() {
  return (
    <div className="h-[16px] flex border-t border-[#7c9cc8] font-['Liberation_Sans',sans-serif] text-[12.5px] leading-[15px] whitespace-nowrap">
      <div className="w-[3px] bg-[#8f9d7a]" />
      <div className="w-[63px] bg-[#c9dcf3] flex items-center pl-[4px] gap-[8px]">
        <NavTri dir="l" bar />
        <NavTri dir="l" />
        <NavTri dir="r" />
        <NavTri dir="r" bar />
      </div>
      <div className="w-[129px] bg-gradient-to-b from-[#f3f8fe] to-[#cfe0f5] text-center font-bold text-[#1a3e78] [clip-path:polygon(0_0,100%_0,92%_100%,4%_100%)]">Relevés journaliers</div>
      <div className="w-[355px] flex bg-gradient-to-b from-[#c4d8f1] to-[#d5e4f7] text-[#2c5a96]">
        <span className="ml-[18px]">Courbe de douleur</span>
        <svg width="14" height="15" viewBox="0 0 14 15" className="ml-[13px]">
          <path d="M1 15L12 0" stroke="#8da7c9" />
        </svg>
        <span className="ml-[8px]">Courbes de perte d'attention</span>
        <svg width="14" height="15" viewBox="0 0 14 15" className="ml-[13px]">
          <path d="M1 15L12 0" stroke="#8da7c9" />
        </svg>
        <svg width="16" height="15" viewBox="0 0 16 15" className="ml-[6px]">
          <rect x="3.5" y="3.5" width="11" height="10" fill="#e7eef8" stroke="#7f97b8" />
          <circle cx="4" cy="3" r="3" fill="#f3b325" />
        </svg>
      </div>
      <div className="flex-1 bg-gradient-to-b from-[#7f9dc8] to-[#a9c0e2]" />
      <div className="w-[5px] bg-[#dfe7f2] border-x border-[#7f97b8]" />
      <div className="w-[15px] bg-[#7c99c5] flex items-center justify-center">
        <span className="border-y-[4px] border-r-[5px] border-y-transparent border-r-[#dbe4f0]" />
      </div>
      <div className="w-[676px] rounded-[1px] bg-gradient-to-b from-[#f6f8fb] via-[#dfe5ed] to-[#a9b7ca] flex items-center justify-center">
        <div className="flex gap-[1px] ml-[-16px]">
          <span className="w-px h-[7px] bg-[#6f7d90]" />
          <span className="w-px h-[7px] bg-[#6f7d90]" />
          <span className="w-px h-[7px] bg-[#6f7d90]" />
          <span className="w-px h-[7px] bg-[#6f7d90]" />
        </div>
      </div>
      <div className="flex-none w-[52px] bg-[#7c99c5] flex items-center pl-[22px]">
        <span className="border-y-[5px] border-l-[5px] border-y-transparent border-l-[#2f4668]" />
      </div>
    </div>
  );
}

function StatusBar() {
  return (
    <div className="h-[23px] flex font-['Liberation_Sans',sans-serif] text-[12px]">
      <div className="w-[38px] bg-gradient-to-b from-[#dce9fa] to-[#aecbef] border-r border-[#8aa8d0] pl-[10px] leading-[22px] text-[#15428b]">Prêt</div>
      <div className="w-[1580px] bg-gradient-to-b from-[#dce9fa] via-[#c5daf5] to-[#a9c8ef]" />
      <div className="flex-1 bg-gradient-to-b from-[#8fb0dc] to-[#6f93c8] border-l border-[#5f7fb0] flex items-center pl-[6px]">
        <div className="w-[55px] h-[17px] flex rounded-[2px] border border-[#9bb5d9] bg-[#cfe0f5]">
          <div className="w-[18px] bg-gradient-to-b from-[#ffe6a8] to-[#fbc15a] flex items-center justify-center">
            <svg width="13" height="11" viewBox="0 0 13 11">
              <rect x="0.5" y="0.5" width="12" height="10" fill="#fff" stroke="#5d6672" />
              <path d="M4.5 0V11M8.5 0V11M0 3.5H13M0 7H13" stroke="#5d6672" />
            </svg>
          </div>
          <div className="w-[18px] flex items-center justify-center">
            <svg width="12" height="12" viewBox="0 0 12 12">
              <rect x="0.5" y="0.5" width="11" height="11" fill="#dfe4ea" stroke="#6d7785" />
              <rect x="3.5" y="2.5" width="5" height="7" fill="#fff" stroke="#9aa3ad" />
            </svg>
          </div>
          <div className="w-[17px] flex items-center justify-center">
            <svg width="12" height="12" viewBox="0 0 12 12">
              <rect x="0.5" y="0.5" width="11" height="11" fill="#dfe4ea" stroke="#6d7785" />
              <path d="M5.5 0V8.5H0M5.5 8.5H11.5" stroke="#6d7785" />
            </svg>
          </div>
        </div>
        <span className="ml-[9px] text-[#13306a] whitespace-nowrap">61 %</span>
        <span className="ml-[9px] w-[15px] h-[15px] rounded-full border border-[#7a8ea8] bg-gradient-to-b from-[#ffffff] to-[#b9c9dd] flex items-center justify-center">
          <span className="w-[7px] h-[2px] bg-[#3d5a86]" />
        </span>
        <div className="relative w-[100px] h-[1px] bg-[#dbe6f4]">
          <span className="absolute left-[23px] top-[-7px] w-[9px] h-[14px] bg-gradient-to-b from-[#f8fafc] to-[#b9c9dd] border border-[#7a8ea8] [clip-path:polygon(0_0,100%_0,100%_65%,50%_100%,0_65%)]" />
          <span className="absolute left-[50px] top-[-3px] w-px h-[7px] bg-[#dbe6f4]" />
        </div>
        <span className="w-[15px] h-[15px] rounded-full border border-[#7a8ea8] bg-gradient-to-b from-[#ffffff] to-[#b9c9dd] flex items-center justify-center relative">
          <span className="w-[7px] h-[2px] bg-[#3d5a86]" />
          <span className="absolute w-[2px] h-[7px] bg-[#3d5a86]" />
        </span>
      </div>
    </div>
  );
}

export default function App() {
  return (
    <div className="relative w-[1861px] h-[1079px] overflow-hidden flex flex-col bg-white font-['Liberation_Sans',sans-serif]">
      <TitleBar />
      <TabRow />
      <Ribbon />
      <FormulaBar />
      <div className="flex flex-1">
        <div className="w-[4px] bg-[#8f9d7a]" />
        <Sheet />
        <VScroll />
      </div>
      <SheetTabs />
      <StatusBar />
      <OfficeButton />
    </div>
  );
}
